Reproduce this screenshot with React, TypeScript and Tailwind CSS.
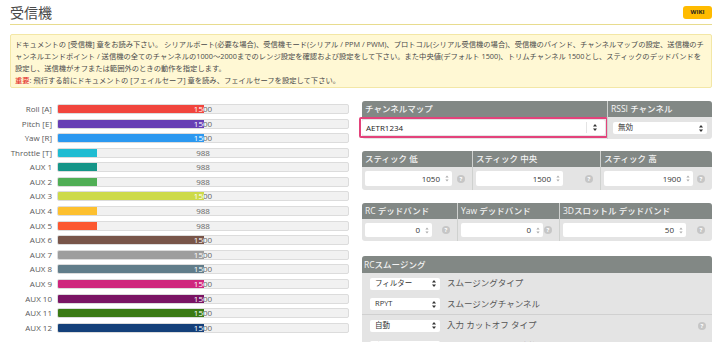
import React from 'react';

const FONT = 'font-["Open_Sans","Noto_Sans_CJK_JP",sans-serif]';

const channels: [string, number, string][] = [
  ['Roll [A]', 1500, 'bg-[#f1453d]'],
  ['Pitch [E]', 1500, 'bg-[#673fb4]'],
  ['Yaw [R]', 1500, 'bg-[#2b98f0]'],
  ['Throttle [T]', 988, 'bg-[#1fbcd2]'],
  ['AUX 1', 988, 'bg-[#159588]'],
  ['AUX 2', 988, 'bg-[#50ae55]'],
  ['AUX 3', 1500, 'bg-[#cdda49]'],
  ['AUX 4', 988, 'bg-[#fdc02f]'],
  ['AUX 5', 988, 'bg-[#fc5830]'],
  ['AUX 6', 1500, 'bg-[#785549]'],
  ['AUX 7', 1500, 'bg-[#9e9e9e]'],
  ['AUX 8', 1500, 'bg-[#617d8a]'],
  ['AUX 9', 1500, 'bg-[#cf267d]'],
  ['AUX 10', 1500, 'bg-[#7a1464]'],
  ['AUX 11', 1500, 'bg-[#3a7a14]'],
  ['AUX 12', 1500, 'bg-[#14407a]'],
];

function ChannelBar({ label, value, color }: { label: string; value: number; color: string }) {
  const width = ((value - 800) / 1400) * 292;
  return (
    <div className="flex items-center gap-[5px] h-[10px]">
      <div className="w-[42px] text-right text-[8px] leading-[10px] text-[#595959] whitespace-nowrap">{label}</div>
      <div className="relative w-[292px] h-[10px] rounded-[2px] bg-[#f1f1f1] border border-[#dcdcdc] overflow-hidden">
        <div className="absolute inset-0 text-center text-[8px] leading-[8px] text-[#666]">{value}</div>
        <div className={`absolute left-0 top-0 bottom-0 overflow-hidden ${color}`} style={{ width }}>
          <div className="w-[290px] text-center text-[8px] leading-[8px] text-white">{value}</div>
        </div>
      </div>
    </div>
  );
}

function SelectArrows() {
  return (
    <svg width="4" height="7" viewBox="0 0 4 7" className="shrink-0">
      <path d="M2 0 L4 2.6 L0 2.6 Z" fill="#333" />
      <path d="M2 7 L4 4.4 L0 4.4 Z" fill="#333" />
    </svg>
  );
}

function SpinArrows() {
  return (
    <svg width="4" height="7" viewBox="0 0 4 7" className="shrink-0">
      <path d="M2 0.5 L3.6 2.6 L0.4 2.6 Z" fill="#aaa" />
      <path d="M2 6.5 L3.6 4.4 L0.4 4.4 Z" fill="#aaa" />
    </svg>
  );
}

function Help() {
  return (
    <div className="w-[8px] h-[8px] rounded-full bg-[#c6c6c6] text-white text-[6px] leading-[8px] font-bold text-center shrink-0">?</div>
  );
}

function NumberCell({ title, value, colW, inputW, first, bodyH, inputH }: {
  title: string; value: number; colW: string; inputW: string; first?: boolean; bodyH: string; inputH: string;
}) {
  return (
    <div className={`${colW} flex flex-col ${first ? '' : 'border-l border-[#cfd1cf]'}`}>
      <div className="h-[16px] bg-[#828885] px-[3px] text-[8.5px] leading-[16px] text-[#f4f4f4] font-medium whitespace-nowrap">{title}</div>
      <div className={`${bodyH} flex items-center justify-between pl-[3px] pr-[7px]`}>
        <div className={`${inputW} ${inputH} bg-white rounded-[2px] flex items-center justify-end gap-[5px] pr-[3px] text-[8px] text-[#333]`}>
          <span>{value}</span>
          <SpinArrows />
        </div>
        <Help />
      </div>
    </div>
  );
}

function SmoothRow({ select, label, help, border }: { select: string; label: string; help?: boolean; border?: boolean }) {
  return (
    <div className={`h-[21px] flex items-center pl-[8px] pr-[6px] ${border ? 'border-b border-[#d0d0d0]' : ''}`}>
      <div className="w-[70px] h-[12px] bg-white rounded-[2px] flex items-center justify-between pl-[5px] pr-[4px] text-[7.5px] text-[#333]">
        <span>{select}</span>
        <SelectArrows />
      </div>
      <div className="ml-[7px] text-[8.5px] text-[#555] flex-1">{label}</div>
      {help && <Help />}
    </div>
  );
}

export default function App() {
  return (
    <div className={`w-[720px] h-[342px] overflow-hidden bg-white px-[10px] pr-[8px] ${FONT}`}>
      <div className="h-[25px] flex items-center justify-between border-b border-[#e8dc8e]">
        <h1 className="text-[14px] text-[#4a4a4a] pt-[1px]">受信機</h1>
        <div className="w-[29px] h-[13px] rounded-[3px] bg-[#ffbb00] text-[6px] font-bold text-[#222] flex items-center justify-center">WIKI</div>
      </div>

      <div className="mt-[9px] bg-[#fff8d4] border border-[#f3e7a6] rounded-[2px] pl-[4px] pt-[3px] pb-[1px] text-[7.3px] leading-[12px] text-[#4a4a4a] whitespace-nowrap overflow-hidden">
        <div>ドキュメントの [受信機] 章をお読み下さい。 シリアルポート(必要な場合)、受信機モード(シリアル / PPM / PWM)、プロトコル(シリアル受信機の場合)、受信機のバインド、チャンネルマップの設定、送信機のチ</div>
        <div>ャンネルエンドポイント / 送信機の全てのチャンネルの1000〜2000までのレンジ設定を確認および設定をして下さい。また中央値(デフォルト 1500)、トリムチャンネル 1500とし、スティックのデッドバンドを</div>
        <div>設定し、送信機がオフまたは範囲外のときの動作を指定します。</div>
        <div><span className="text-[#e2231a]">重要</span>: 飛行する前にドキュメントの [フェイルセーフ] 章を読み、フェイルセーフを設定して下さい。</div>
      </div>

      <div className="mt-[13px] flex gap-[13px]">
        <div className="pt-[3px] flex flex-col gap-[4.58px]">
          {channels.map(([label, value, color]) => (
            <ChannelBar key={label} label={label} value={value} color={color} />
          ))}
        </div>

        <div className="w-[350px] flex flex-col">
          <div className="flex bg-[#e4e4e4] rounded-[3px]">
            <div className="w-[245px] flex flex-col">
              <div className="h-[16px] bg-[#828885] rounded-tl-[3px] px-[3px] text-[8.5px] leading-[16px] text-[#f4f4f4] font-medium">チャンネルマップ</div>
              <div className="h-[22px]">
                <div className="ml-[-3px] w-[249px] h-[21px] border-2 border-[#e3437b] rounded-[2px] p-[1px]">
                  <div className="h-full bg-white rounded-[2px] flex items-center justify-between pl-[4px] pr-[8px] text-[8px] text-[#222] font-medium">
                    <span>AETR1234</span>
                    <div className="flex items-center gap-[6px] h-full">
                      <div className="w-px h-[11px] bg-[#e4e4e4]" />
                      <SelectArrows />
                    </div>
                  </div>
                </div>
              </div>
            </div>
            <div className="flex-1 flex flex-col border-l border-[#cfd1cf]">
              <div className="h-[16px] bg-[#828885] rounded-tr-[3px] px-[3px] text-[8.5px] leading-[16px] text-[#f4f4f4] font-medium">RSSI チャンネル</div>
              <div className="h-[22px] px-[5px] flex items-center">
                <div className="w-full h-[12px] bg-white rounded-[2px] flex items-center justify-between pl-[5px] pr-[4px] text-[7.5px] text-[#333]">
                  <span>無効</span>
                  <SelectArrows />
                </div>
              </div>
            </div>
          </div>

          <div className="mt-[12px] flex bg-[#e4e4e4] rounded-[3px] overflow-hidden">
            <NumberCell first title="スティック 低" value={1050} colW="w-[110px]" inputW="w-[87px]" bodyH="h-[23px]" inputH="h-[15px]" />
            <NumberCell title="スティック 中央" value={1500} colW="w-[128px]" inputW="w-[87px]" bodyH="h-[23px]" inputH="h-[15px]" />
            <NumberCell title="スティック 高" value={1900} colW="flex-1" inputW="w-[89px]" bodyH="h-[23px]" inputH="h-[15px]" />
          </div>

          <div className="mt-[13px] flex bg-[#e4e4e4] rounded-[3px] overflow-hidden">
            <NumberCell first title="RC デッドバンド" value={0} colW="w-[95px]" inputW="w-[67px]" bodyH="h-[22px]" inputH="h-[14px]" />
            <NumberCell title="Yaw デッドバンド" value={0} colW="w-[102px]" inputW="w-[82px]" bodyH="h-[22px]" inputH="h-[14px]" />
            <NumberCell title="3Dスロットル デッドバンド" value={50} colW="flex-1" inputW="w-[123px]" bodyH="h-[22px]" inputH="h-[14px]" />
          </div>

          <div className="mt-[15px] bg-[#e4e4e4] rounded-[3px] overflow-hidden">
            <div className="h-[17px] bg-[#828885] px-[2px] text-[8.5px] leading-[17px] text-[#f4f4f4] font-medium">RCスムージング</div>
            <SmoothRow select="フィルター" label="スムージングタイプ" />
            <SmoothRow select="RPYT" label="スムージングチャンネル" border />
            <SmoothRow select="自動" label="入力 カットオフ タイプ" help />
            <SmoothRow select="自動" label="入力 カットオフ 周波数" help />
          </div>
        </div>
      </div>
    </div>
  );
}
